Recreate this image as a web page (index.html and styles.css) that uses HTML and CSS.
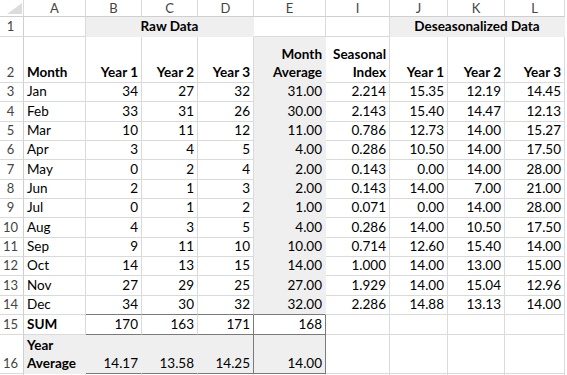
FILE: index.html
```html
<!DOCTYPE html>
<html lang="en">
<head>
    <meta charset="UTF-8">
    <title>Seasonal Index</title>
    <link rel="stylesheet" href="styles.css">
</head>
<body>
    <table class="sheet">
        <colgroup>
            <col class="c-rh"><col class="c-a"><col class="c-b"><col class="c-c"><col class="c-d">
            <col class="c-e"><col class="c-i"><col class="c-j"><col class="c-k"><col class="c-l">
        </colgroup>
        <tr class="r-cols">
            <th class="corner">
                <svg viewBox="0 0 24 16" width="24" height="16"><polygon points="22,3 22,14 7,14" fill="#dcdcdc"/></svg>
            </th>
            <th>A</th><th>B</th><th>C</th><th>D</th><th>E</th><th>I</th><th>J</th><th>K</th><th>L</th>
        </tr>
        <tr class="r-1">
            <td class="rh">1</td><td></td>
            <td class="fill b center" colspan="3">Raw Data</td>
            <td></td><td></td>
            <td class="fill b center" colspan="3">Deseasonalized Data</td>
        </tr>
        <tr class="r-2">
            <td class="rh">2</td><td class="b">Month</td>
            <td class="b num">Year 1</td><td class="b num">Year 2</td><td class="b num">Year 3</td>
            <td class="b num fill wrap">Month<br>Average</td><td class="b num wrap">Seasonal<br>Index</td>
            <td class="b num">Year 1</td><td class="b num">Year 2</td><td class="b num">Year 3</td>
        </tr>
        <tr class="r"><td class="rh">3</td><td>Jan</td><td class="num">34</td><td class="num">27</td><td class="num">32</td><td class="num fill">31.00</td><td class="num">2.214</td><td class="num">15.35</td><td class="num">12.19</td><td class="num">14.45</td></tr>
        <tr class="r"><td class="rh">4</td><td>Feb</td><td class="num">33</td><td class="num">31</td><td class="num">26</td><td class="num fill">30.00</td><td class="num">2.143</td><td class="num">15.40</td><td class="num">14.47</td><td class="num">12.13</td></tr>
        <tr class="r"><td class="rh">5</td><td>Mar</td><td class="num">10</td><td class="num">11</td><td class="num">12</td><td class="num fill">11.00</td><td class="num">0.786</td><td class="num">12.73</td><td class="num">14.00</td><td class="num">15.27</td></tr>
        <tr class="r"><td class="rh">6</td><td>Apr</td><td class="num">3</td><td class="num">4</td><td class="num">5</td><td class="num fill">4.00</td><td class="num">0.286</td><td class="num">10.50</td><td class="num">14.00</td><td class="num">17.50</td></tr>
        <tr class="r"><td class="rh">7</td><td>May</td><td class="num">0</td><td class="num">2</td><td class="num">4</td><td class="num fill">2.00</td><td class="num">0.143</td><td class="num">0.00</td><td class="num">14.00</td><td class="num">28.00</td></tr>
        <tr class="r"><td class="rh">8</td><td>Jun</td><td class="num">2</td><td class="num">1</td><td class="num">3</td><td class="num fill">2.00</td><td class="num">0.143</td><td class="num">14.00</td><td class="num">7.00</td><td class="num">21.00</td></tr>
        <tr class="r"><td class="rh">9</td><td>Jul</td><td class="num">0</td><td class="num">1</td><td class="num">2</td><td class="num fill">1.00</td><td class="num">0.071</td><td class="num">0.00</td><td class="num">14.00</td><td class="num">28.00</td></tr>
        <tr class="r"><td class="rh">10</td><td>Aug</td><td class="num">4</td><td class="num">3</td><td class="num">5</td><td class="num fill">4.00</td><td class="num">0.286</td><td class="num">14.00</td><td class="num">10.50</td><td class="num">17.50</td></tr>
        <tr class="r"><td class="rh">11</td><td>Sep</td><td class="num">9</td><td class="num">11</td><td class="num">10</td><td class="num fill">10.00</td><td class="num">0.714</td><td class="num">12.60</td><td class="num">15.40</td><td class="num">14.00</td></tr>
        <tr class="r"><td class="rh">12</td><td>Oct</td><td class="num">14</td><td class="num">13</td><td class="num">15</td><td class="num fill">14.00</td><td class="num">1.000</td><td class="num">14.00</td><td class="num">13.00</td><td class="num">15.00</td></tr>
        <tr class="r"><td class="rh">13</td><td>Nov</td><td class="num">27</td><td class="num">29</td><td class="num">25</td><td class="num fill">27.00</td><td class="num">1.929</td><td class="num">14.00</td><td class="num">15.04</td><td class="num">12.96</td></tr>
        <tr class="r"><td class="rh">14</td><td>Dec</td><td class="num bb">34</td><td class="num bb">30</td><td class="num bb">32</td><td class="num fill bb">32.00</td><td class="num">2.286</td><td class="num">14.88</td><td class="num">13.13</td><td class="num">14.00</td></tr>
        <tr class="r-15">
            <td class="rh">15</td><td class="b">SUM</td>
            <td class="num bb">170</td><td class="num bb">163</td><td class="num bb br">171</td>
            <td class="num bb br">168</td><td></td><td></td><td></td><td></td>
        </tr>
        <tr class="r-16">
            <td class="rh">16</td><td class="b fill wrap">Year<br>Average</td>
            <td class="num fill bb">14.17</td><td class="num fill bb">13.58</td><td class="num fill bb br">14.25</td>
            <td class="num fill bb br">14.00</td><td></td><td></td><td></td><td></td>
        </tr>
        <tr class="r-17">
            <td class="rh"></td><td></td><td></td><td></td><td></td><td></td><td></td><td></td><td></td><td></td>
        </tr>
    </table>
</body>
</html>
```

FILE: styles.css
```css
body {
    margin: 0;
    background: #fff;
    font-family: Lato, "Liberation Sans", sans-serif;
    font-size: 13.5px;
    color: #000;
    overflow: hidden;
}

.sheet {
    border-collapse: separate;
    border-spacing: 0;
    table-layout: fixed;
    width: 565px;
}

.c-rh { width: 24px; }
.c-a { width: 62px; }
.c-b { width: 56px; }
.c-c { width: 56px; }
.c-d { width: 56px; }
.c-e { width: 72px; }
.c-i { width: 64px; }
.c-j { width: 58px; }
.c-k { width: 57px; }
.c-l { width: 60px; }

.sheet td,
.sheet th {
    padding: 0 3px 1px;
    border-right: 1px solid #dadada;
    border-bottom: 1px solid #dadada;
    vertical-align: bottom;
    white-space: nowrap;
    overflow: hidden;
    line-height: 17px;
    font-variant-numeric: tabular-nums;
}

.sheet td.wrap {
    line-height: 18px;
}

.sheet th {
    font-weight: normal;
    color: #444;
    text-align: center;
    vertical-align: middle;
    font-size: 13px;
    line-height: 14px;
    border-bottom-color: #cfcfcf;
}

.sheet th.corner {
    padding: 0;
    line-height: 0;
}

.sheet td.rh {
    color: #444;
    text-align: center;
    padding: 0 2px 1px 0;
    font-size: 13px;
    border-right-color: #cfcfcf;
}

.r-cols { height: 16px; }
.r-1 { height: 20px; }
.r-2 { height: 46px; }
.r { height: 19.33px; }
.r-15 { height: 20px; }
.r-16 { height: 39px; }
.r-17 { height: 4px; }

.num { text-align: right; }
.center { text-align: center; }
.b { font-weight: bold; }

.sheet td.fill {
    background: #efefef;
    border-color: #efefef;
}

.sheet td.bb { border-bottom-color: #7a7a7a; }
.sheet td.br { border-right-color: #7a7a7a; }
```
